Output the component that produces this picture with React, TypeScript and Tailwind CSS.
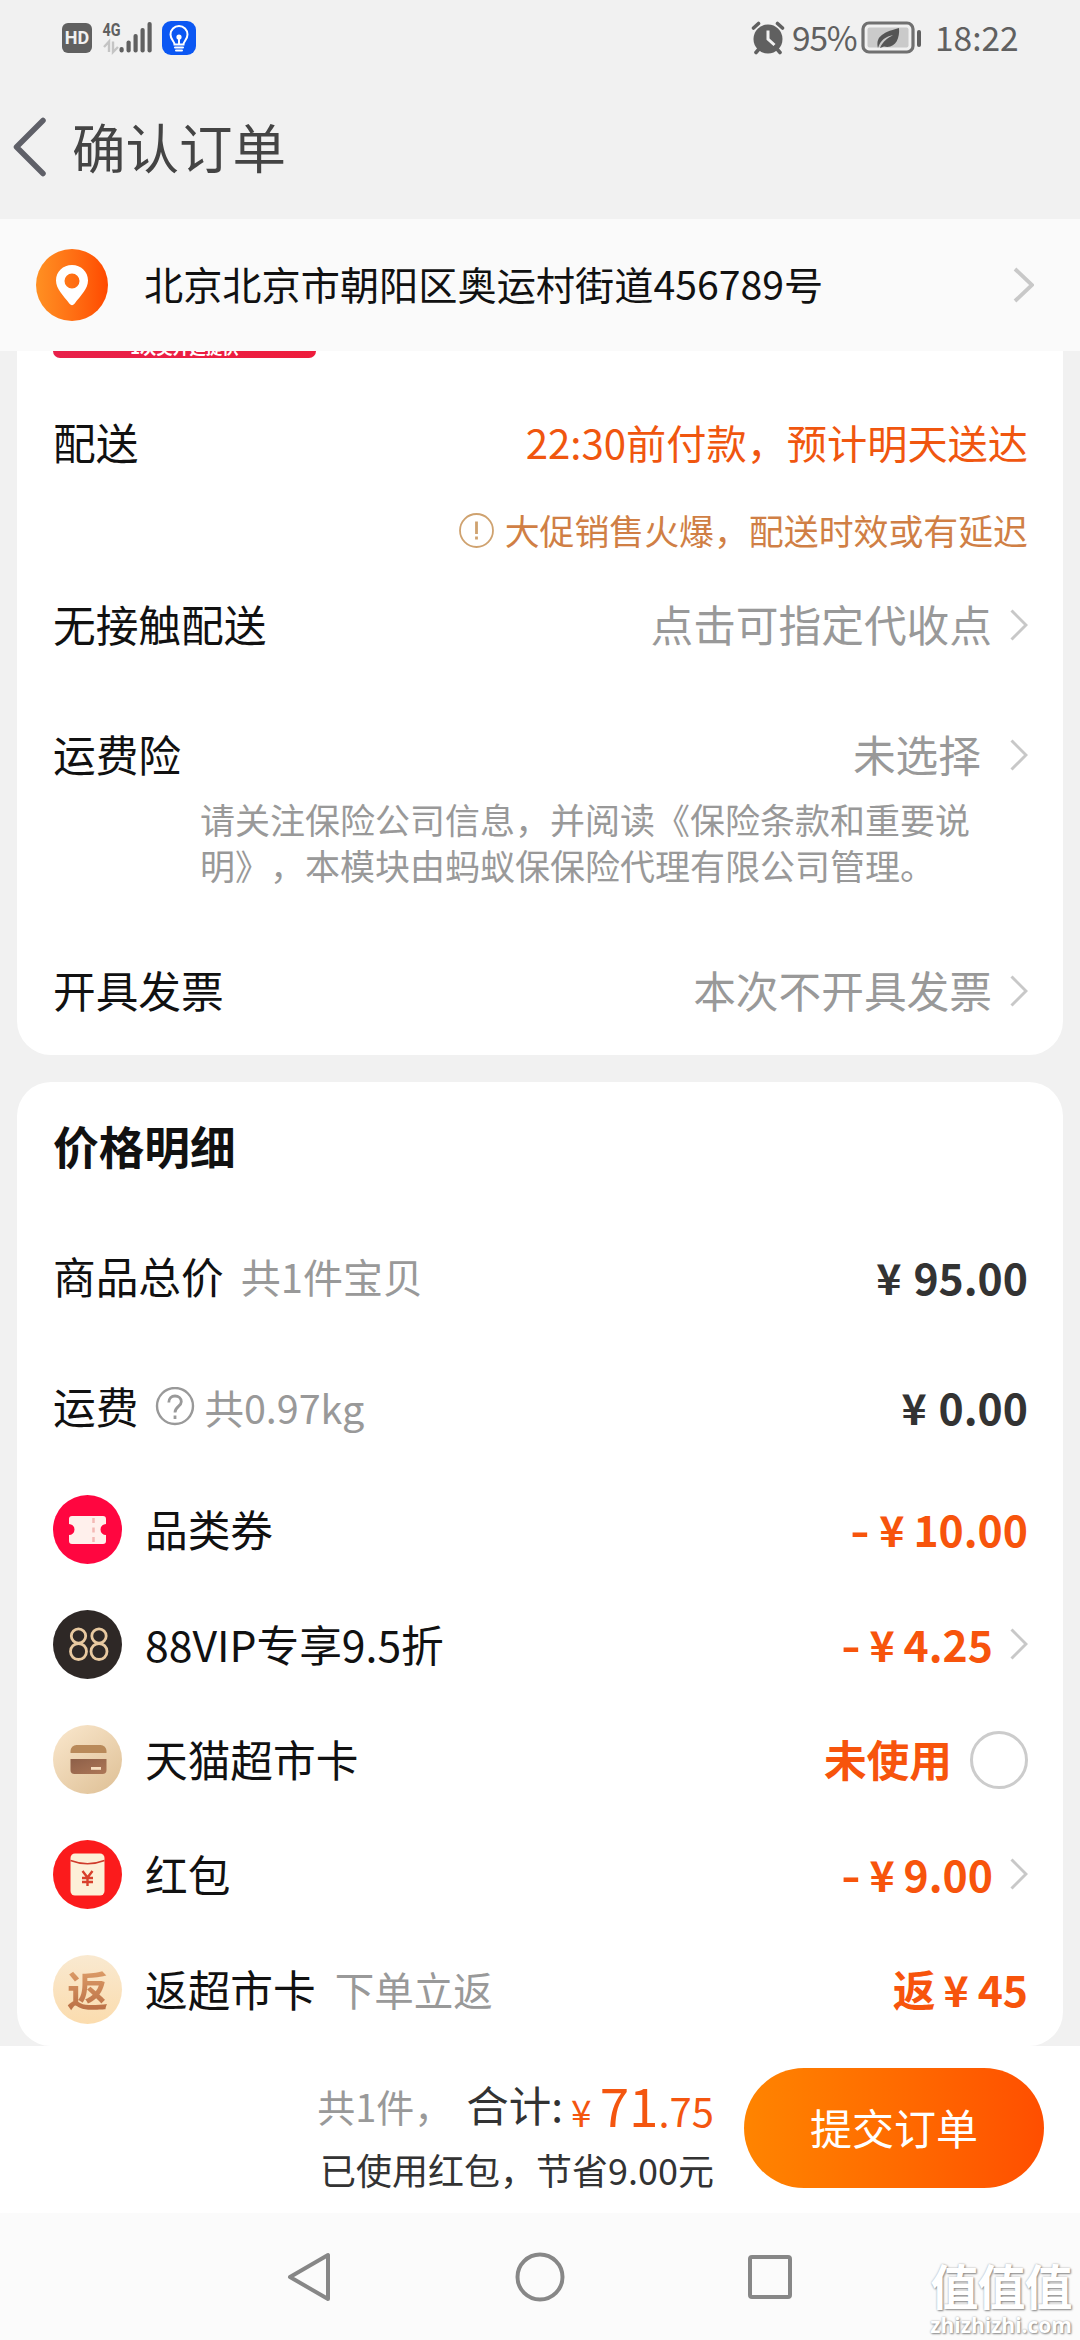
import React from "react";

const YEN = "¥";

function Chevron({ large = false }: { large?: boolean }) {
  return large ? (
    <svg className="h-[36px] w-[22px]" viewBox="0 0 22 36" fill="none" stroke="#c8c8c8" strokeWidth="3.8">
      <path d="M3 2 20 18 3 34" />
    </svg>
  ) : (
    <svg className="h-[32px] w-[18px] shrink-0" viewBox="0 0 18 32" fill="none" stroke="#c8c8c8" strokeWidth="3">
      <path d="M1.500 1.500 16 16 1.500 30.500" />
    </svg>
  );
}

function StatusBar() {
  return (
    <div className="flex h-[76px] items-center pl-[62px] pr-[63px] text-[#606060]">
      <div className="flex h-[30px] w-[30px] items-center justify-center rounded-[6px] bg-[#606060] font-[Roboto] text-[18px] font-bold leading-none text-[#f1f1f1]">
        HD
      </div>
      <svg className="ml-[10px] h-[34px] w-[52px]" viewBox="0 0 52 34" fill="none">
        <text x="0.500" y="14.500" fontFamily="Roboto" fontWeight="700" fontSize="19" fill="#606060" textLength="18" lengthAdjust="spacingAndGlyphs">4G</text>
        <path d="M2 26 7 20.500V31M11 20.500V31L16 26" stroke="#c4c4c4" strokeWidth="2.400" />
        <g fill="#606060">
          <rect x="17.500" y="26" width="4.200" height="5.500" rx="2" />
          <rect x="24.500" y="19.500" width="4.200" height="12" rx="2" />
          <rect x="31.500" y="13" width="4.200" height="18.500" rx="2" />
          <rect x="38.500" y="7" width="4.200" height="24.500" rx="2" />
          <rect x="45.500" y="1" width="4.200" height="30.500" rx="2" />
        </g>
      </svg>
      <svg className="ml-[8px] h-[34px] w-[34px]" viewBox="0 0 34 34" fill="none" stroke="#fff" strokeWidth="2" strokeLinecap="round">
        <rect width="34" height="34" rx="9" fill="#0b57f3" stroke="none" />
        <path d="M12.500 23.500c0-3-4-5-4-10a8.500 8.500 0 0 1 17 0c0 5-4 7-4 10zM13 26.500h8M14 29.500h6M17 16.500v7" />
        <circle cx="17" cy="16" r="1.600" fill="#fff" />
      </svg>
      <div className="flex-1" />
      <svg className="h-[34px] w-[34px]" viewBox="0 0 34 34" fill="none">
        <circle cx="17" cy="18" r="14.500" fill="#606060" />
        <path d="M2.500 7 7.500 2.500M31.500 7 26.500 2.500M5 31.500 8 28M29 31.500 26 28" stroke="#606060" strokeWidth="3.600" strokeLinecap="round" />
        <path d="M17 9.500V18l6.500 6" stroke="#f1f1f1" strokeWidth="3" />
      </svg>
      <span className="mb-[2px] ml-[7px] w-[65px] text-[33.5px] leading-none tracking-[-1.2px]">95%</span>
      <svg className="ml-[4px] h-[34px] w-[62px]" viewBox="0 0 62 34" fill="none">
        <rect x="2" y="2" width="50" height="29" rx="6" stroke="#707070" strokeWidth="3.200" />
        <rect x="6.500" y="6.500" width="41" height="20" rx="2" fill="#cacaca" />
        <path d="M17 27C15 17 19 12 38 7 39 18 34 28 23 25.500L19 27C22 20 27 17 32 14 25 15.500 19.500 19 17 27Z" fill="#555" />
        <rect x="56" y="9" width="4" height="17" rx="2" fill="#606060" />
      </svg>
      <span className="mb-[2px] ml-[12px] w-[82px] whitespace-nowrap text-[33.5px] leading-none">18:22</span>
    </div>
  );
}

function Row({ className, label, children }: { className: string; label?: React.ReactNode; children?: React.ReactNode }) {
  return (
    <div className={"flex items-center justify-between whitespace-nowrap text-[42.7px] leading-none text-[#111] " + className}>
      <div className="flex items-center">{typeof label === "string" ? <span className="mb-[3px]">{label}</span> : label}</div>
      <div className="flex items-center">{children}</div>
    </div>
  );
}

function Price({ value, prefix, dark }: { value: string; prefix?: string; dark?: boolean }) {
  return (
    <span className={"mb-[2px] flex items-baseline font-bold " + (dark ? "text-[#333]" : "text-[#f7540c]")}>
      {prefix && <span className={prefix === "-" ? "mr-[9px] inline-block origin-right scale-x-125" : "mr-[8px]"}>{prefix}</span>}
      <span>{YEN}</span>
      <span className={dark ? "ml-[12px]" : "ml-[9px]"}>{value}</span>
    </span>
  );
}

function TicketIcon() {
  return (
    <svg className="h-[69px] w-[69px]" viewBox="0 0 69 69">
      <circle cx="34.500" cy="34.500" r="34.500" fill="#ff0640" />
      <path d="M19 21h31a3 3 0 0 1 3 3v5a5.500 5.500 0 0 0 0 11v6a3 3 0 0 1-3 3H19a3 3 0 0 1-3-3v-6a5.500 5.500 0 0 0 0-11v-5a3 3 0 0 1 3-3Z" fill="#fff0ec" />
      <path d="M40.500 23v24" stroke="#f3b9b5" strokeWidth="2.500" strokeDasharray="5 4.500" />
    </svg>
  );
}

function VipIcon() {
  return (
    <svg className="h-[69px] w-[69px]" viewBox="0 0 69 69" fill="none">
      <circle cx="34.500" cy="34.500" r="34.500" fill="#2e2826" />
      <g stroke="#e8c9a0" strokeWidth="2.800">
        <circle cx="25.500" cy="26" r="7.200" />
        <circle cx="25.500" cy="41.500" r="8" />
        <circle cx="46" cy="26" r="7.200" />
        <circle cx="46" cy="41.500" r="8" />
      </g>
    </svg>
  );
}

function CardIcon() {
  return (
    <svg className="h-[69px] w-[69px]" viewBox="0 0 69 69">
      <defs>
        <linearGradient id="cardBg" x1="0.100" y1="0" x2="0.900" y2="1">
          <stop stopColor="#f9e6cb" />
          <stop offset="1" stopColor="#dfc197" />
        </linearGradient>
        <linearGradient id="cardBody" x1="0" y1="0" x2="1" y2="1">
          <stop stopColor="#8d5f48" />
          <stop offset="1" stopColor="#ad7757" />
        </linearGradient>
      </defs>
      <circle cx="34.500" cy="34.500" r="34.500" fill="url(#cardBg)" />
      <path d="M17.500 28v-2a6 6 0 0 1 6-6h24a6 6 0 0 1 6 6v2Z" fill="#b98a5a" />
      <path d="M17.500 34h36v11a4 4 0 0 1-4 4h-28a4 4 0 0 1-4-4Z" fill="url(#cardBody)" />
      <rect x="38" y="42" width="10" height="2.800" fill="#f7dfc0" />
    </svg>
  );
}

function PacketIcon() {
  return (
    <svg className="h-[69px] w-[69px]" viewBox="0 0 69 69" fill="none">
      <circle cx="34.500" cy="34.500" r="34.500" fill="#fb1b1c" />
      <rect x="17.500" y="13.500" width="34" height="42" rx="4.500" fill="#fdf0d8" />
      <path d="M17.500 20.500Q34.500 27 51.500 20.500" stroke="#cf3c2c" strokeWidth="1.700" />
      <path d="M29.500 31 34.500 37.500 39.500 31M34.500 37v9M29 38h11M29 42h11" stroke="#d8402c" strokeWidth="2.400" />
    </svg>
  );
}

function RebateIcon() {
  return (
    <div className="flex h-[69px] w-[69px] items-center justify-center rounded-full bg-linear-to-b from-[#f9e9d0] to-[#fbdcae]">
      <span className="mb-[3px] bg-linear-to-b from-[#e0a16c] to-[#ba6f45] bg-clip-text text-[41px] font-bold leading-[46px] text-transparent">返</span>
    </div>
  );
}

export default function App() {
  return (
    <div className="flex h-[2340px] w-[1080px] flex-col overflow-hidden bg-[#f1f1f1] font-['Noto_Sans_CJK_SC',sans-serif] text-[#111] [text-spacing-trim:space-all]">
      <StatusBar />

      <header className="flex h-[143px] items-center pl-[12px]">
        <svg className="h-[64px] w-[36px]" viewBox="0 0 36 64" fill="none" stroke="#5f6068" strokeWidth="5.500" strokeLinecap="round" strokeLinejoin="round">
          <path d="M31 4.500 4.500 31 31 57.500" />
        </svg>
        <h1 className="mb-[3px] ml-[24px] text-[53.5px] leading-none text-[#444]">确认订单</h1>
      </header>

      <section className="flex h-[132px] shrink-0 items-center bg-[#fafafa] pl-[36px] pr-[46px]">
        <div className="flex h-[72px] w-[72px] items-center justify-center rounded-full bg-linear-to-r from-[#ff9022] to-[#ff4800]">
          <svg className="h-[42px] w-[34px]" viewBox="0 0 34 42">
            <path fillRule="evenodd" fill="#fff" d="M17 1C8 1 1 7.500 1 16.500 1 25 8 31 14.500 39.800Q17 42.500 19.500 39.800C26 31 33 25 33 16.500 33 7.500 26 1 17 1Zm0 8.500a7.500 7.500 0 1 1 0 15 7.500 7.500 0 0 1 0-15Z" />
          </svg>
        </div>
        <p className="mb-[2px] ml-[36px] flex-1 text-[39.2px] leading-none">北京北京市朝阳区奥运村街道456789号</p>
        <Chevron large />
      </section>

      <section className="mx-[17px] h-[704px] shrink-0 rounded-b-[34px] bg-white pl-[36px] pr-[35px]">
        <div className="flex h-[7px] w-[263px] items-end justify-center overflow-hidden rounded-b-[8px] bg-linear-to-r from-[#e8204a] to-[#ee1c3c]">
          <span className="mb-[3px] text-[16.5px] font-bold leading-none text-white">1次奖升延提供</span>
        </div>
        <Row className="mt-[41px] h-[88px]" label="配送">
          <span className="mb-[2px] text-[40.2px] text-[#f0560f]">22:30前付款，预计明天送达</span>
        </Row>
        <Row className="h-[88px]">
          <svg className="mb-[2px] mr-[11px] h-[35px] w-[35px]" viewBox="0 0 35 35" fill="none" stroke="#cfa26f" strokeWidth="1.800">
            <circle cx="17.500" cy="17.500" r="16.500" />
            <path d="M17.500 8.500v12.500M17.500 23.500v3" strokeWidth="2.800" />
          </svg>
          <span className="mb-[2px] text-[34.9px] text-[#d07f45]">大促销售火爆，配送时效或有延迟</span>
        </Row>
        <Row className="h-[100px]" label="无接触配送">
          <span className="mb-[3px] mr-[18px] text-[#999]">点击可指定代收点</span>
          <Chevron />
        </Row>
        <Row className="mt-[39px] h-[82px]" label="运费险">
          <span className="mb-[3px] mr-[29px] text-[#999]">未选择</span>
          <Chevron />
        </Row>
        <p className="ml-[147px] whitespace-nowrap text-[35px] leading-[46px] text-[#999]">
          请关注保险公司信息，并阅读《保险条款和重要说
          <br />
          明》，本模块由蚂蚁保保险代理有限公司管理。
        </p>
        <Row className="mt-[53px] h-[100px]" label="开具发票">
          <span className="mb-[3px] mr-[18px] text-[#999]">本次不开具发票</span>
          <Chevron />
        </Row>
      </section>

      <section className="mx-[17px] mt-[27px] h-[964px] shrink-0 overflow-hidden rounded-[34px] bg-white pl-[36px] pr-[35px] pt-[25px]">
        <h2 className="flex h-[80px] items-center pb-[2px] text-[45.7px] font-bold leading-none">价格明细</h2>
        <Row
          className="mt-[25px] h-[130px]"
          label={<><span className="mb-[3px]">商品总价</span><span className="mb-[2px] ml-[17px] text-[40px] text-[#999]">共1件宝贝</span></>}
        >
          <Price value="95.00" dark />
        </Row>
        <Row
          className="h-[130px]"
          label={
            <>
              <span className="mb-[3px]">运费</span>
              <svg className="ml-[17px] h-[40px] w-[40px]" viewBox="0 0 40 40" fill="none" stroke="#999" strokeWidth="2.400">
                <circle cx="20" cy="19" r="18" />
                <path d="M13.800 15.500c0-4 2.700-6.500 6.200-6.500s6.300 2.300 6.300 5.700c0 4.500-6.300 5-6.300 10.800M20 28.500v3.500" strokeWidth="2.800" />
              </svg>
              <span className="ml-[9px] text-[39.5px] text-[#999]">共0.97kg</span>
            </>
          }
        >
          <Price value="0.00" dark />
        </Row>
        <Row className="h-[115px]" label={<><TicketIcon /><span className="mb-[2px] ml-[23px]">品类券</span></>}>
          <Price prefix="-" value="10.00" />
        </Row>
        <Row className="h-[115px]" label={<><VipIcon /><span className="mb-[2px] ml-[23px]">88VIP专享9.5折</span></>}>
          <Price prefix="-" value="4.25" />
          <span className="ml-[17px] flex"><Chevron /></span>
        </Row>
        <Row className="h-[115px]" label={<><CardIcon /><span className="mb-[2px] ml-[23px]">天猫超市卡</span></>}>
          <span className="mb-[2px] font-bold text-[#f7540c]">未使用</span>
          <span className="ml-[18px] h-[58px] w-[58px] rounded-full border-[3px] border-[#ccc]" />
        </Row>
        <Row className="h-[115px]" label={<><PacketIcon /><span className="mb-[2px] ml-[23px]">红包</span></>}>
          <Price prefix="-" value="9.00" />
          <span className="ml-[17px] flex"><Chevron /></span>
        </Row>
        <Row
          className="h-[115px]"
          label={<><RebateIcon /><span className="mb-[2px] ml-[23px]">返超市卡</span><span className="mb-[2px] ml-[19px] text-[39.5px] text-[#999]">下单立返</span></>}
        >
          <Price prefix="返" value="45" />
        </Row>
      </section>

      <footer className="flex h-[167px] shrink-0 items-start justify-end bg-white pr-[36px] pt-[22px]">
        <div className="mr-[30px] flex flex-col items-end whitespace-nowrap leading-none text-[#333]">
          <div className="flex h-[83px] items-start">
            <div className="mt-[15px] flex items-baseline">
              <span className="text-[38px] text-[#999]">共1件，</span>
              <span className="ml-[14px] text-[42.5px]">合计:</span>
            </div>
            <div className="mt-[10px] flex items-baseline text-[#f4560f]">
              <span className="ml-[8px] text-[37px]">{YEN}</span>
              <span className="ml-[8px] text-[53px]">71</span>
              <span className="text-[40px]">.75</span>
            </div>
          </div>
          <p className="text-[36px]">已使用红包，节省9.00元</p>
        </div>
        <button className="h-[120px] w-[300px] rounded-full bg-linear-to-r from-[#ff8400] to-[#ff4e00] pb-[2px] text-[42px] leading-none text-white">
          提交订单
        </button>
      </footer>

      <nav className="relative flex h-[127px] shrink-0 items-center justify-between bg-[#fbfbfb] pl-[286px] pr-[287px]">
        <svg className="h-[52px] w-[46px]" viewBox="0 0 46 52" fill="none" stroke="#878787" strokeWidth="4" strokeLinejoin="round">
          <path d="M42 4v44L4 26Z" />
        </svg>
        <svg className="h-[50px] w-[50px]" viewBox="0 0 50 50" fill="none" stroke="#878787" strokeWidth="4">
          <circle cx="25" cy="25" r="22.500" />
        </svg>
        <svg className="h-[46px] w-[46px]" viewBox="0 0 46 46" fill="none" stroke="#878787" strokeWidth="4">
          <rect x="3" y="3" width="40" height="40" rx="2" />
        </svg>
        <div className="absolute bottom-[4px] right-[8px] flex flex-col items-center whitespace-nowrap font-bold leading-none text-white [text-shadow:1px_1px_2px_#888,0_0_2px_#aaa]">
          <span className="text-[48px] tracking-[-1px]">值值值</span>
          <span className="mt-[7px] font-['Open_Sans'] text-[21px]">zhizhizhi.com</span>
        </div>
      </nav>
    </div>
  );
}
